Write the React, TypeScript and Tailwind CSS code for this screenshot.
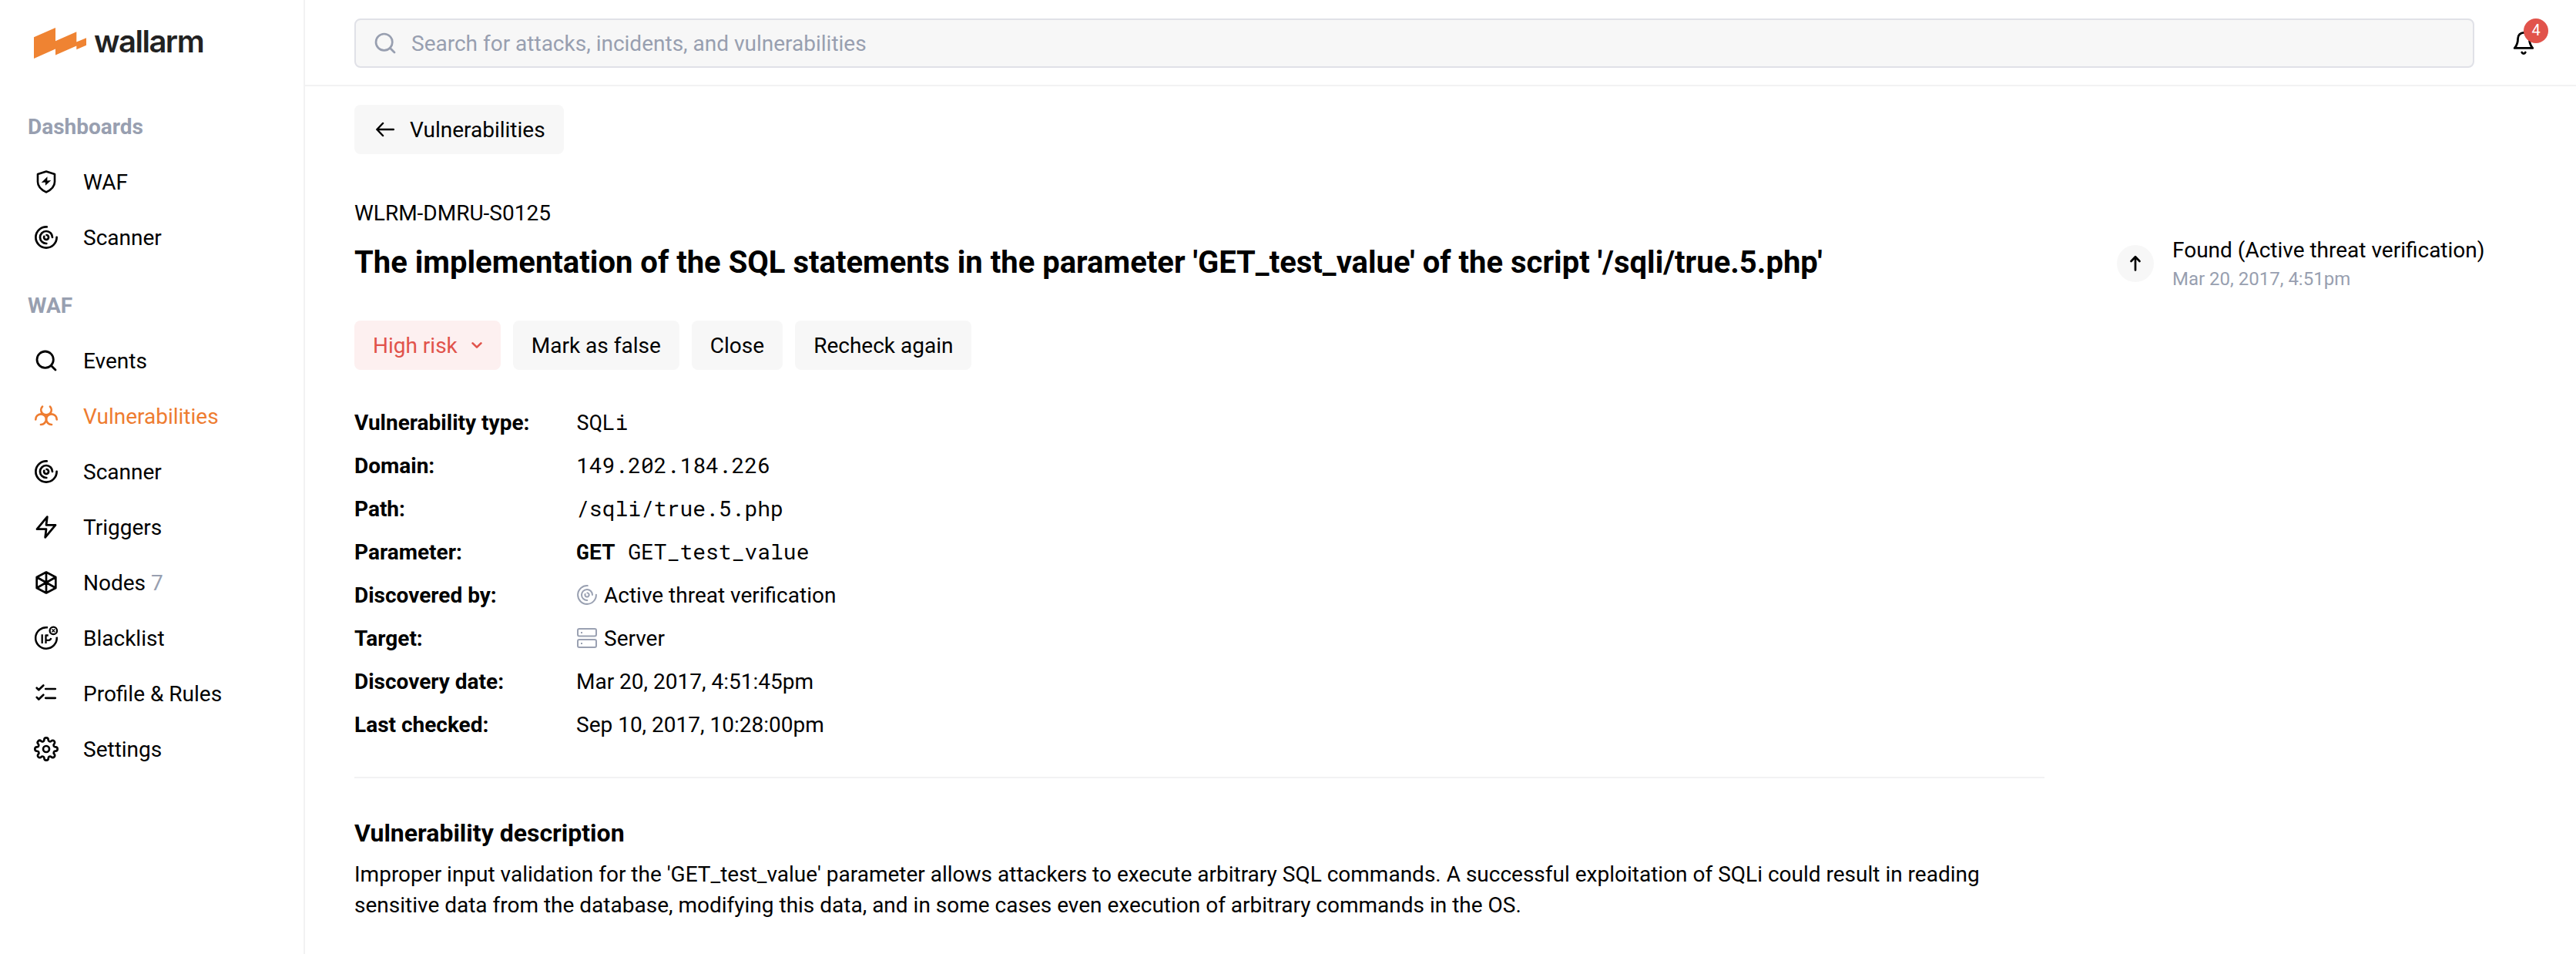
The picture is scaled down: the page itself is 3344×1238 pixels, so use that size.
import React from 'react';
import { Search } from 'lucide-react';

type IconProps = { className?: string; strokeWidth?: number };

function Svg({ className = 'size-8', strokeWidth = 2.2, children }: IconProps & { children: React.ReactNode }) {
  return (
    <svg viewBox="0 0 32 32" className={className} fill="none" stroke="currentColor" strokeWidth={strokeWidth} strokeLinecap="round" strokeLinejoin="round">
      {children}
    </svg>
  );
}

const ShieldIcon = () => (
  <Svg strokeWidth={2.6}>
    <path d="M16 2.500 27 6V16c0 6-5 10.500-11 13.400C10 26.500 5 22 5 16V6Z" />
    <path d="M17.500 9.300 9.700 17l5.100-.4.2 4.100 7.300-6.700-5 .4Z" fill="currentColor" stroke="none" />
  </Svg>
);

const ScannerIcon = ({ className, strokeWidth = 2.7 }: IconProps) => (
  <Svg className={className} strokeWidth={strokeWidth}>
    <path d="M16.800 2.400A13.600 13.600 0 1 0 29.600 15.800" />
    <path d="M16.300 24A8 8 0 1 1 24 16" />
    <path d="M16.500 13A3 3 0 1 1 13.300 14.800" />
  </Svg>
);

const BiohazardIcon = () => (
  <Svg strokeWidth={2.7}>
    <path d="M11 3.600A6.500 6.500 0 0 0 10.800 12.200Q12.800 14.300 16 14.300T21.200 12.200A6.500 6.500 0 0 0 21 3.600" />
    <path d="M2.300 20.400A6.900 6.900 0 0 1 9.100 13.300 6.900 6.900 0 0 1 16 20.200 6.900 6.900 0 0 1 9 27" />
    <path d="M29.700 20.400A6.900 6.900 0 0 0 22.900 13.300 6.900 6.900 0 0 0 16 20.200 6.900 6.900 0 0 0 23 27" />
  </Svg>
);

const ZapIcon = () => (
  <Svg strokeWidth={2.8}>
    <path d="M17.300 2.700 4 18.700h12l-1.300 10.600 13.300-16H16Z" />
  </Svg>
);

const NodesIcon = () => (
  <Svg strokeWidth={2.7}>
    <path d="M16 2.500 28.300 9v14L16 29.500 3.700 23V9ZM16 2.500v27M3.700 9l24.600 14M28.300 9 3.700 23" />
  </Svg>
);

const BlacklistIcon = () => (
  <Svg strokeWidth={2.5}>
    <path d="M18 2.300A13.800 13.800 0 1 0 29.700 14.700" strokeLinecap="butt" />
    <circle cx="25.300" cy="6.400" r="4.700" strokeWidth="2.300" />
    <path d="m23.900 5 2.800 2.800m0-2.800-2.800 2.800" strokeWidth="1.600" />
    <path d="M10.700 11.300V23M15.500 23V12.500h3.200M15.500 18.800h3.700q2.400 0 3.200-2.600" strokeWidth="2.300" strokeLinecap="butt" />
  </Svg>
);

const ChecklistIcon = () => (
  <Svg strokeWidth={2.7}>
    <path d="m3.700 8.800 2.600 2.500 6-5.800M15.200 10h12.600M3.700 20.900l2.600 2.600 6-5.800M15.200 21.800h12.600" />
  </Svg>
);

const GearIcon = () => (
  <svg viewBox="0 0 24 24" className="size-8" fill="none" stroke="currentColor" strokeWidth="2" strokeLinecap="round" strokeLinejoin="round">
    <circle cx="12" cy="12" r="3" />
    <path d="M19.400 15a1.650 1.650 0 0 0 .33 1.820l.06.06a2 2 0 1 1-2.830 2.830l-.06-.06a1.650 1.650 0 0 0-1.820-.33 1.650 1.650 0 0 0-1 1.510V21a2 2 0 1 1-4 0v-.09A1.650 1.650 0 0 0 9 19.400a1.650 1.650 0 0 0-1.820.33l-.06.06a2 2 0 1 1-2.830-2.830l.06-.06a1.650 1.650 0 0 0 .33-1.820 1.650 1.650 0 0 0-1.510-1H3a2 2 0 1 1 0-4h.09A1.650 1.650 0 0 0 4.600 9a1.650 1.650 0 0 0-.33-1.820l-.06-.06a2 2 0 1 1 2.830-2.830l.06.06a1.650 1.650 0 0 0 1.820.33H9a1.650 1.650 0 0 0 1-1.510V3a2 2 0 1 1 4 0v.09a1.650 1.650 0 0 0 1 1.510 1.650 1.650 0 0 0 1.820-.33l.06-.06a2 2 0 1 1 2.830 2.830l-.06.06a1.650 1.650 0 0 0-.33 1.820V9a1.650 1.650 0 0 0 1.510 1H21a2 2 0 1 1 0 4h-.09a1.650 1.650 0 0 0-1.510 1z" />
  </svg>
);

const ServerIcon = () => (
  <svg viewBox="0 0 26 26" className="ml-px size-[26px] text-[#9aa1b2]" fill="none" stroke="currentColor" strokeWidth="2">
    <rect x="1" y="1" width="24" height="9.500" rx="2" />
    <rect x="1" y="15" width="24" height="10" rx="2" />
    <path d="M5 5.900h2M5 20h2" />
  </svg>
);

const BackArrow = () => (
  <Svg strokeWidth={2.5}>
    <path d="M26.800 16H5.400M13 8l-7.600 8 7.600 8" />
  </Svg>
);

const UpArrow = () => (
  <Svg strokeWidth={2.7}>
    <path d="M16 24.500V7.500M10.500 13 16 7.300l5.500 5.700" />
  </Svg>
);

const BellIcon = () => (
  <Svg strokeWidth={2.8}>
    <path d="M16 2.400a7.400 7.400 0 0 0-7.400 7.400c0 4-.6 8.700-4.400 12.600h23.600c-3.800-3.900-4.400-8.600-4.400-12.600A7.400 7.400 0 0 0 16 2.400Z" />
    <path d="M13.700 28a2.500 2.500 0 0 0 4.600 0" />
  </Svg>
);

const Chevron = () => (
  <svg viewBox="0 0 14 8" className="ml-[18px] h-2 w-3.5" fill="none" stroke="currentColor" strokeWidth="2.600" strokeLinecap="round" strokeLinejoin="round">
    <path d="m1.600 1.400 5.400 5.200 5.400-5.200" />
  </svg>
);

const Logo = () => (
  <div className="flex h-10 items-start gap-2.5 pl-11">
    <svg viewBox="0 0 68 40" className="h-10 w-[68px]">
      <path fill="#ef8332" d="M0 12.300 28 0v17.300L55.300 5.300v13.200L68 13.300v9.500L55.300 28.300v-4.800L28 35.500v-8L0 40Z" />
    </svg>
    <span className="-mt-1.5 font-['Inter'] text-[40px] leading-[48px] font-semibold tracking-[-1.500px] text-[#222]">wallarm</span>
  </div>
);

type NavEntry = { label: string; icon: React.ReactNode; count?: number; active?: boolean };

const dashboards: NavEntry[] = [
  { label: 'WAF', icon: <ShieldIcon /> },
  { label: 'Scanner', icon: <ScannerIcon /> },
];

const waf: NavEntry[] = [
  { label: 'Events', icon: <Search className="size-8" strokeWidth={2.1} /> },
  { label: 'Vulnerabilities', icon: <BiohazardIcon />, active: true },
  { label: 'Scanner', icon: <ScannerIcon /> },
  { label: 'Triggers', icon: <ZapIcon /> },
  { label: 'Nodes', icon: <NodesIcon />, count: 7 },
  { label: 'Blacklist', icon: <BlacklistIcon /> },
  { label: 'Profile & Rules', icon: <ChecklistIcon /> },
  { label: 'Settings', icon: <GearIcon /> },
];

function NavGroup({ title, items }: { title: string; items: NavEntry[] }) {
  return (
    <div className="flex flex-col">
      <div className="flex h-[72px] items-center pt-0.5 pl-9 font-bold text-[#989fb0]">{title}</div>
      {items.map((item) => (
        <a key={item.label} className={item.active ? 'flex h-[72px] items-center text-[#ee7c30]' : 'flex h-[72px] items-center'}>
          <span className="mr-7 ml-10 flex w-10 justify-center">{item.icon}</span>
          <span className="pt-0.5">
            {item.label}
            {item.count !== undefined && <span className="text-[#989fb0]"> {item.count}</span>}
          </span>
        </a>
      ))}
    </div>
  );
}

function Mono({ children }: { children: React.ReactNode }) {
  return <span className="font-['Roboto_Mono','Liberation_Mono',monospace] whitespace-pre">{children}</span>;
}

const details: [string, React.ReactNode][] = [
  ['Vulnerability type:', <Mono>SQLi</Mono>],
  ['Domain:', <Mono>149.202.184.226</Mono>],
  ['Path:', <Mono>/sqli/true.5.php</Mono>],
  ['Parameter:', <Mono><b>GET</b> GET_test_value</Mono>],
  ['Discovered by:', <><ScannerIcon className="size-7 text-[#9aa1b2]" strokeWidth={2.3} /><span className="ml-2 pt-0.5">Active threat verification</span></>],
  ['Target:', <><ServerIcon /><span className="ml-[9px] pt-0.5">Server</span></>],
  ['Discovery date:', <span className="pt-0.5">Mar 20, 2017, 4:51:45pm</span>],
  ['Last checked:', <span className="pt-0.5">Sep 10, 2017, 10:28:00pm</span>],
];

function Button({ children, className = 'bg-[#f7f7f7]' }: { children: React.ReactNode; className?: string }) {
  return <button className={`flex h-16 items-center rounded-lg px-6 ${className}`}>{children}</button>;
}

export default function App() {
  return (
    <div className="flex h-[1238px] w-[3344px] overflow-hidden bg-white font-['Roboto',sans-serif] text-[28px] leading-10 text-black">
      <aside className="flex w-[396px] shrink-0 flex-col border-r-2 border-[#f2f2f3] pt-9">
        <Logo />
        <nav className="flex flex-col gap-4 pt-[52px]">
          <NavGroup title="Dashboards" items={dashboards} />
          <NavGroup title="WAF" items={waf} />
        </nav>
      </aside>

      <div className="flex min-w-0 flex-1 flex-col">
        <header className="flex h-28 shrink-0 items-center border-b-2 border-[#f2f2f3] pt-0.5 pl-16">
          <div className="flex h-16 w-[2752px] items-center rounded-lg border-2 border-[#e0e1e7] bg-[#f7f7f7] pl-[22px] text-[#989fb0]">
            <Search className="size-8" strokeWidth={2} />
            <span className="ml-[18px] pt-0.5">Search for attacks, incidents, and vulnerabilities</span>
          </div>
          <div className="relative ml-12">
            <BellIcon />
            <span className="absolute -top-4 left-4 flex size-8 items-center justify-center rounded-full bg-[#e1534b] pb-0.5 text-xl text-white">4</span>
          </div>
        </header>

        <div className="flex pt-6 pl-16">
          <main className="flex w-[2194px] shrink-0 flex-col items-start">
            <Button>
              <BackArrow />
              <span className="ml-4 pt-0.5">Vulnerabilities</span>
            </Button>
            <div className="mt-[57px]">WLRM-DMRU-S0125</div>
            <h1 className="mt-4 text-[40px] leading-[56px] font-bold whitespace-nowrap">
              The implementation of the SQL statements in the parameter 'GET_test_value' of the script '/sqli/true.5.php'
            </h1>
            <div className="mt-[47px] flex gap-4">
              <Button className="bg-[#fdf0f0] text-[#e1534b]">
                <span className="pt-0.5">High risk</span>
                <Chevron />
              </Button>
              <Button><span className="pt-0.5">Mark as false</span></Button>
              <Button><span className="pt-0.5">Close</span></Button>
              <Button><span className="pt-0.5">Recheck again</span></Button>
            </div>
            <dl className="mt-10 flex flex-col">
              {details.map(([label, value]) => (
                <div key={label} className="flex h-14 items-center">
                  <dt className="w-72 pt-0.5 font-bold">{label}</dt>
                  <dd className="flex items-center">{value}</dd>
                </div>
              ))}
            </dl>
            <div className="mt-10 w-full border-t-2 border-[#f2f2f3]" />
            <h2 className="mt-[47px] text-[32px] leading-[48px] font-bold">Vulnerability description</h2>
            <p className="mt-2.5 w-[2130px]">
              Improper input validation for the 'GET_test_value' parameter allows attackers to execute arbitrary SQL commands. A successful
              exploitation of SQLi could result in reading sensitive data from the database, modifying this data, and in some cases even
              execution of arbitrary commands in the OS.
            </p>
          </main>

          <section className="mt-[166px] ml-[94px] flex h-20 items-center">
            <span className="flex size-12 items-center justify-center rounded-full bg-[#f7f7f7]">
              <UpArrow />
            </span>
            <div className="ml-6">
              <div>Found (Active threat verification)</div>
              <div className="text-2xl leading-[34px] text-[#989fb0]">Mar 20, 2017, 4:51pm</div>
            </div>
          </section>
        </div>
      </div>
    </div>
  );
}
